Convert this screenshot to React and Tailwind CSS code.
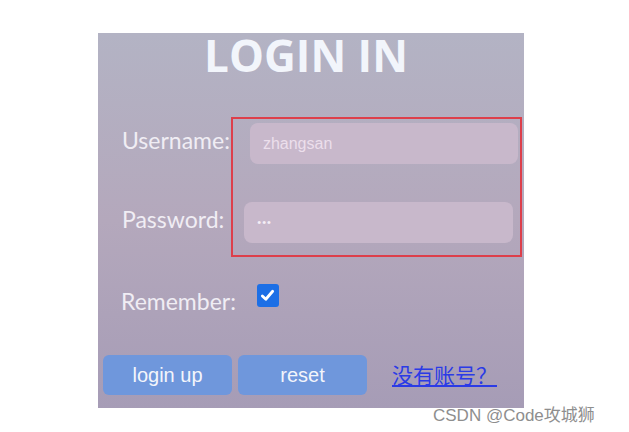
import React from 'react';

const Checkbox = () => (
  <span className="flex items-center justify-center w-[22px] h-[23px] rounded-[3px] bg-[#1c6fe6]">
    <svg width="15" height="15" viewBox="0 0 16 16" fill="none">
      <path d="M2.5 8.5 L6.2 12 L13.5 3.5" stroke="#ffffff" strokeWidth="3" strokeLinecap="round" strokeLinejoin="round" />
    </svg>
  </span>
);

const App = () => {
  return (
    <div className="w-[629px] h-[432px] bg-white relative overflow-hidden">
      {/* Login panel */}
      <div className="relative ml-[98px] mt-[33px] w-[426px] h-[375px] flex flex-col bg-gradient-to-b from-[#b3b3c4] via-[#b4a8bc] to-[#a69cb6]">
        <h1 className="h-[44px] leading-[44px] text-[44px] font-bold text-center text-[#f2f5fb] pr-[10px] font-['Open_Sans',sans-serif]">
          LOGIN IN
        </h1>

        {/* Username */}
        <div className="mt-[46px] flex items-center h-[41px]">
          <label className="ml-[24px] mb-[6px] text-[23px] text-[#f0edf4] font-['Lato',sans-serif]">Username:</label>
          <div className="ml-[20px] w-[268px] h-[41px] rounded-[8px] bg-[#c8b8cb] flex items-center pl-[13px] text-[16px] text-[#ecdfec] font-['Liberation_Sans',sans-serif]">
            zhangsan
          </div>
        </div>

        {/* Password */}
        <div className="mt-[38px] flex items-center h-[41px]">
          <label className="ml-[24px] mb-[6px] text-[23px] text-[#f0edf4] font-['Lato',sans-serif]">Password:</label>
          <div className="ml-[20px] w-[269px] h-[41px] rounded-[8px] bg-[#c8b8cb] flex items-center pl-[13px] text-[11px] tracking-[1px] text-[#f4eef6] font-['Liberation_Sans',sans-serif]">
            •••
          </div>
        </div>

        {/* Remember */}
        <div className="mt-[40px] flex items-center h-[24px]">
          <label className="ml-[23px] mt-[12px] text-[23px] text-[#f0edf4] font-['Lato',sans-serif]">Remember:</label>
          <span className="ml-[21px]">
            <Checkbox />
          </span>
        </div>

        {/* Buttons */}
        <div className="mt-[48px] flex items-center h-[40px] font-['Liberation_Sans',sans-serif]">
          <button className="ml-[5px] w-[129px] h-[40px] rounded-[6px] bg-[#6f97dc] text-[20px] text-[#f3f5fb]">login up</button>
          <button className="ml-[6px] w-[129px] h-[40px] rounded-[6px] bg-[#6f97dc] text-[20px] text-[#f3f5fb]">reset</button>
          <a className="ml-[25px] text-[21px] text-[#2b3be6] underline font-['Noto_Sans_CJK_SC',sans-serif]">没有账号？</a>
        </div>

        {/* Annotation box */}
        <div className="absolute left-[133px] top-[84px] w-[291px] h-[140px] border-2 border-[#dd3f4b]" />
      </div>

      {/* Watermark */}
      <div className="absolute left-[433px] top-[403px] text-[17px] text-[#8e8e8e] font-['Liberation_Sans','Noto_Sans_CJK_SC',sans-serif] whitespace-nowrap">
        CSDN @Code攻城狮
      </div>
    </div>
  );
};

export default App;
